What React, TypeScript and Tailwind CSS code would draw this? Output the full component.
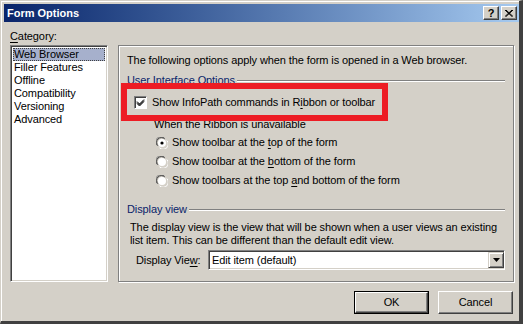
import React from 'react';

const font = { fontFamily: '"Liberation Sans", Arial, sans-serif' };

// Win2000-style sunken box
const sunken =
  'border border-t-[#808080] border-l-[#808080] border-r-white border-b-white shadow-[inset_1px_1px_0_#404040,inset_-1px_-1px_0_#d4d0c8]';

const U: React.FC<{ children: React.ReactNode }> = ({ children }) => (
  <span className="underline underline-offset-2">{children}</span>
);

const Radio: React.FC<{ checked?: boolean; children: React.ReactNode }> = ({ checked, children }) => (
  <div className="flex items-center h-[19px]">
    <svg width="12" height="12" viewBox="0 0 12 12" className="ml-[1px] mr-[4px]">
      <path d="M8.5 1.2 A5 5 0 0 0 1.2 8.5" fill="none" stroke="#808080" strokeWidth="1" />
      <path d="M8.8 2 A4.2 4.2 0 0 0 2 8.8" fill="none" stroke="#404040" strokeWidth="1" />
      <circle cx="6" cy="6" r="4" fill="#fff" />
      <path d="M10.8 3.5 A5 5 0 0 1 3.5 10.8" fill="none" stroke="#fff" strokeWidth="1" />
      {checked && <circle cx="6" cy="6" r="1.6" fill="#000" />}
    </svg>
    <span>{children}</span>
  </div>
);

const GroupLabel: React.FC<{ children: React.ReactNode }> = ({ children }) => (
  <div className="flex items-center h-[13px]">
    <span className="text-[#0a246a] pr-[2px]">{children}</span>
    <div className="flex-1 mr-[8px] h-[2px] border-t border-t-[#808080] border-b border-b-white" />
  </div>
);

const App: React.FC = () => {
  const categories = ['Web Browser', 'Filler Features', 'Offline', 'Compatibility', 'Versioning', 'Advanced'];

  return (
    <div
      className="w-[523px] h-[324px] bg-[#d4d0c8] flex flex-col text-[11px] leading-[13px] tracking-[-0.1px] text-black border-l border-t border-l-[#d4d0c8] border-t-[#d4d0c8] border-r-[4px] border-b-[3px] border-r-[#404040] border-b-[#404040] overflow-hidden"
      style={font}
    >
      <div className="border-l border-t border-l-white border-t-white flex-1 flex flex-col pl-[2px] pt-[2px]">
        {/* Title bar */}
        <div className="h-[18px] bg-linear-to-r from-[#0a246a] to-[#a6caf0] flex items-center pl-[3px] pr-[2px]">
          <span className="text-white font-bold text-[11px] tracking-normal flex-1">Form Options</span>
          <div className="flex items-center">
            <div className="w-[16px] h-[14px] bg-[#d4d0c8] border border-t-white border-l-white border-r-[#404040] border-b-[#404040] shadow-[inset_-1px_-1px_0_#808080] flex items-center justify-center font-bold text-[11px] leading-none">
              ?
            </div>
            <div className="ml-[2px] w-[16px] h-[14px] bg-[#d4d0c8] border border-t-white border-l-white border-r-[#404040] border-b-[#404040] shadow-[inset_-1px_-1px_0_#808080] flex items-center justify-center">
              <svg width="8" height="7" viewBox="0 0 8 7">
                <path d="M0 0 L7 6.5 M1 0 L8 6.5 M7 0 L0 6.5 M8 0 L1 6.5" stroke="#000" strokeWidth="1" />
              </svg>
            </div>
          </div>
        </div>

        {/* Body */}
        <div className="flex-1 flex flex-col pl-[6px] pr-[4px]">
          <div className="mt-[8px] h-[13px]">
            <U>C</U>ategory:
          </div>
          <div className="flex mt-[2px]">
            {/* Category list */}
            <div className={`w-[98px] h-[237px] bg-white ${sunken} p-[2px]`}>
              {categories.map((c, i) => (
                <div
                  key={c}
                  className={
                    i === 0
                      ? 'h-[13px] pl-[1px] bg-[#a6b0cc] outline-1 outline-dotted outline-[#404040] -outline-offset-1'
                      : 'h-[13px] pl-[1px]'
                  }
                >
                  {c}
                </div>
              ))}
            </div>

            {/* Options panel */}
            <div className="relative ml-[10px] w-[396px] h-[237px] border border-[#808080] shadow-[inset_1px_1px_0_#fff,1px_1px_0_#fff] pl-[8px] pt-[8px]">
              <div className="h-[13px]">The following options apply when the form is opened in a Web browser.</div>
              <div className="mt-[7px]">
                <GroupLabel>User Interface Options</GroupLabel>
              </div>
              <div className="flex items-center mt-[9px] ml-[7px] h-[13px]">
                <div className="w-[13px] h-[13px] bg-white border border-t-[#808080] border-l-[#808080] border-r-white border-b-white shadow-[inset_1px_1px_0_#404040] flex items-center justify-center">
                  <svg width="9" height="9" viewBox="0 0 9 9">
                    <path d="M1 3.5 L3.5 6 L8 1.5 M1 4.5 L3.5 7 L8 2.5 M1 5.5 L3.5 8 L8 3.5" fill="none" stroke="#000" strokeWidth="1" />
                  </svg>
                </div>
                <span className="ml-[5px]">
                  Show InfoPath commands in R<U>i</U>bbon or toolbar
                </span>
              </div>
              <div className="mt-[9px] ml-[27px] h-[13px]">When the Ribbon is unavailable</div>
              <div className="ml-[28px] mt-[2px]">
                <Radio checked>
                  Show toolbar at the <U>t</U>op of the form
                </Radio>
                <Radio>
                  Show toolbar at the <U>b</U>ottom of the form
                </Radio>
                <Radio>
                  Show toolbars at the top <U>a</U>nd bottom of the form
                </Radio>
              </div>
              <div className="mt-[13px]">
                <GroupLabel>Display view</GroupLabel>
              </div>
              <div className="ml-[3px] mt-[5px]">
                The display view is the view that will be shown when a user views an existing
                <br />
                list item. This can be different than the default edit view.
              </div>
              <div className="flex items-center ml-[9px] mt-[3px]">
                <span className="w-[72px]">
                  Display Vie<U>w</U>:
                </span>
                <div className={`w-[297px] h-[20px] bg-white ${sunken} flex items-center`}>
                  <span className="flex-1 pl-[3px]">Edit item (default)</span>
                  <div className="w-[16px] h-[16px] bg-[#d4d0c8] border border-t-[#d4d0c8] border-l-[#d4d0c8] border-r-[#404040] border-b-[#404040] shadow-[inset_1px_1px_0_#fff,inset_-1px_-1px_0_#808080] flex items-center justify-center">
                    <svg width="7" height="4" viewBox="0 0 7 4">
                      <path d="M0 0 H7 L3.5 4 Z" fill="#000" />
                    </svg>
                  </div>
                </div>
              </div>

              {/* red highlight annotation */}
              <div className="absolute left-[2px] top-[37px] w-[267px] h-[38px] border-[6px] border-[#ed1c24] pointer-events-none" />
            </div>
          </div>

          {/* Buttons */}
          <div className="flex justify-end mt-[9px] pr-[2px]">
            <div className="w-[75px] h-[23px] border border-black">
              <div className="w-full h-full border border-t-white border-l-white border-r-[#404040] border-b-[#404040] shadow-[inset_-1px_-1px_0_#808080] flex items-center justify-center">
                OK
              </div>
            </div>
            <div className="ml-[9px] w-[75px] h-[23px] border border-t-white border-l-white border-r-[#404040] border-b-[#404040] shadow-[inset_-1px_-1px_0_#808080] flex items-center justify-center">
              Cancel
            </div>
          </div>
        </div>
      </div>
    </div>
  );
};

export default App;
